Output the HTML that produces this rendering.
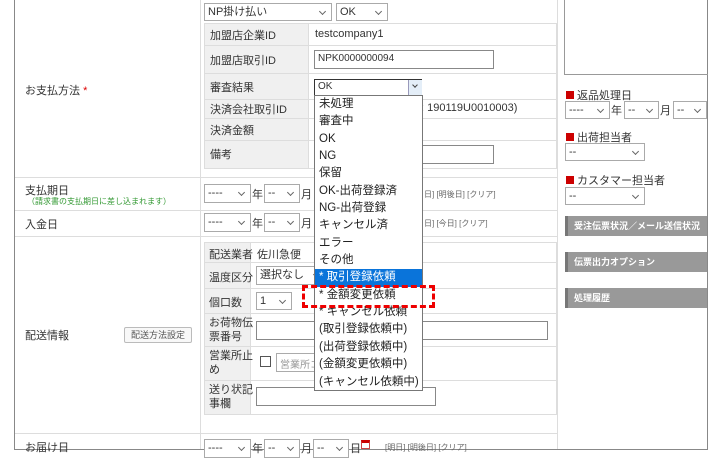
<!DOCTYPE html>
<html><head><meta charset="utf-8"><style>
*{box-sizing:border-box;margin:0;padding:0}
body{width:715px;height:456px;background:#fff;position:relative;overflow:hidden;font-family:"Liberation Sans","Noto Sans CJK JP",sans-serif;font-size:11px;color:#333}
.a{position:absolute;white-space:nowrap}
.b{position:absolute;border:1px solid #ababab;background:#fff;white-space:nowrap;overflow:hidden}
.sel{position:absolute;border:1px solid #aaa;background:#fff;font-size:11px;padding:1px 3px;line-height:15px;white-space:nowrap}
.sel:after{content:"";position:absolute;right:6px;top:5px;width:4px;height:4px;border-right:1px solid #666;border-bottom:1px solid #666;transform:rotate(45deg)}
.bar{position:absolute;left:565px;width:142px;height:20px;background:#999;border-left:3px solid #777;color:#fff;font-size:9px;line-height:20px;padding-left:6px;font-weight:bold;white-space:nowrap}
.dd div{height:17.35px;line-height:17px;padding-left:4px;font-size:11.5px;color:#222;white-space:nowrap}
.red{display:inline-block;width:8px;height:8px;background:#c00;margin-right:3px}
.lnk{position:absolute;font-size:8px;color:#666;white-space:nowrap}
</style></head><body>
<div class="a" style="left:14px;top:0;width:694px;height:450px;border:1px solid #888;border-top:none"></div>
<div class="a" style="left:200px;top:0;width:1px;height:449px;background:#ddd"></div>
<div class="a" style="left:557px;top:0;width:1px;height:449px;background:#ddd"></div>
<div class="a" style="left:15px;top:177px;width:542px;height:1px;background:#ddd"></div>
<div class="a" style="left:15px;top:210px;width:542px;height:1px;background:#ddd"></div>
<div class="a" style="left:15px;top:236px;width:542px;height:1px;background:#ddd"></div>
<div class="a" style="left:15px;top:433px;width:542px;height:1px;background:#ddd"></div>

<div class="a" style="left:25px;top:82px">お支払方法 <span style="color:#d00">*</span></div>
<div class="a" style="left:25px;top:182px">支払期日</div>
<div class="a" style="left:27px;top:196px;font-size:8px;color:#393">（請求書の支払期日に差し込まれます）</div>
<div class="a" style="left:25px;top:216px">入金日</div>
<div class="a" style="left:25px;top:327px">配送情報</div>
<div class="a" style="left:124px;top:327px;width:68px;height:16px;border:1px solid #bbb;border-radius:2px;background:#f8f8f8;font-size:9px;line-height:14px;text-align:center;color:#555">配送方法設定</div>
<div class="a" style="left:25px;top:439px">お届け日</div>

<div class="sel" style="left:204px;top:3px;width:128px;height:18px">NP掛け払い</div>
<div class="sel" style="left:336px;top:3px;width:52px;height:18px">OK</div>

<div class="a" style="left:204px;top:23px;width:353px;height:146px;border:1px solid #ddd"></div>
<div class="a" style="left:205px;top:24px;width:104px;height:144px;background:#f0f0f0;border-right:1px solid #ddd"></div>
<div class="a" style="left:205px;top:45px;width:351px;height:1px;background:#ddd"></div>
<div class="a" style="left:205px;top:73px;width:351px;height:1px;background:#ddd"></div>
<div class="a" style="left:205px;top:99px;width:351px;height:1px;background:#ddd"></div>
<div class="a" style="left:205px;top:118px;width:351px;height:1px;background:#ddd"></div>
<div class="a" style="left:205px;top:140px;width:351px;height:1px;background:#ddd"></div>
<div class="a" style="left:210px;top:27px">加盟店企業ID</div>
<div class="a" style="left:210px;top:52px">加盟店取引ID</div>
<div class="a" style="left:210px;top:79px">審査結果</div>
<div class="a" style="left:210px;top:101px">決済会社取引ID</div>
<div class="a" style="left:210px;top:122px">決済金額</div>
<div class="a" style="left:210px;top:146px">備考</div>
<div class="a" style="left:315px;top:28px">testcompany1</div>
<div class="b" style="left:314px;top:50px;width:180px;height:19px;border-color:#888;padding:2px 3px;font-size:10px">NPK0000000094</div>
<div class="a" style="left:421px;top:102px">: 190119U0010003)</div>
<div class="b" style="left:420px;top:145px;width:74px;height:19px;border-color:#888"></div>
<div class="b" style="left:314px;top:79px;width:108px;height:17px;border-color:#333;padding:1px 3px;font-size:10px">OK</div>
<div class="a" style="left:408px;top:80px;width:14px;height:15px;background:#e4eef8;border-left:1px solid #99b"><div style="position:absolute;left:4px;top:3px;width:4px;height:4px;border-right:1px solid #444;border-bottom:1px solid #444;transform:rotate(45deg)"></div></div>

<div class="a" style="left:564px;top:0;width:144px;height:75px;border:1px solid #999;border-top:none;border-right:none"></div>
<div class="a" style="left:566px;top:87px;font-size:11px"><span class="red"></span>返品処理日</div>
<div class="sel" style="left:565px;top:101px;width:45px;height:18px">----</div><div class="a" style="left:611px;top:102px">年</div>
<div class="sel" style="left:624px;top:101px;width:35px;height:18px">--</div><div class="a" style="left:660px;top:102px">月</div>
<div class="sel" style="left:673px;top:101px;width:34px;height:18px">--</div>
<div class="a" style="left:566px;top:129px"><span class="red"></span>出荷担当者</div>
<div class="sel" style="left:565px;top:143px;width:80px;height:18px">--</div>
<div class="a" style="left:566px;top:172px"><span class="red"></span>カスタマー担当者</div>
<div class="sel" style="left:565px;top:187px;width:80px;height:18px">--</div>
<div class="bar" style="top:216px">受注伝票状況／メール送信状況</div>
<div class="bar" style="top:252px">伝票出力オプション</div>
<div class="bar" style="top:288px">処理履歴</div>

<div class="sel" style="left:204px;top:184px;width:47px;height:19px">----</div><div class="a" style="left:252px;top:186px">年</div>
<div class="sel" style="left:264px;top:184px;width:36px;height:19px">--</div><div class="a" style="left:301px;top:186px">月</div>
<div class="lnk" style="left:424px;top:189px">日] [明後日] [クリア]</div>
<div class="sel" style="left:204px;top:213px;width:47px;height:19px">----</div><div class="a" style="left:252px;top:215px">年</div>
<div class="sel" style="left:264px;top:213px;width:36px;height:19px">--</div><div class="a" style="left:301px;top:215px">月</div>
<div class="lnk" style="left:424px;top:218px">日] [今日] [クリア]</div>

<div class="a" style="left:204px;top:242px;width:353px;height:173px;border:1px solid #ddd"></div>
<div class="a" style="left:205px;top:243px;width:46px;height:171px;background:#f0f0f0;border-right:1px solid #ddd"></div>
<div class="a" style="left:205px;top:262px;width:351px;height:1px;background:#ddd"></div>
<div class="a" style="left:205px;top:288px;width:351px;height:1px;background:#ddd"></div>
<div class="a" style="left:205px;top:313px;width:351px;height:1px;background:#ddd"></div>
<div class="a" style="left:205px;top:346px;width:351px;height:1px;background:#ddd"></div>
<div class="a" style="left:205px;top:380px;width:351px;height:1px;background:#ddd"></div>
<div class="a" style="left:209px;top:246px">配送業者</div>
<div class="a" style="left:209px;top:269px">温度区分</div>
<div class="a" style="left:209px;top:294px">個口数</div>
<div class="a" style="left:209px;top:316px;line-height:14px">お荷物伝<br>票番号</div>
<div class="a" style="left:209px;top:349px;line-height:14px">営業所止<br>め</div>
<div class="a" style="left:209px;top:383px;line-height:14px">送り状記<br>事欄</div>
<div class="a" style="left:257px;top:246px">佐川急便</div>
<div class="sel" style="left:256px;top:266px;width:70px;height:19px">選択なし</div>
<div class="sel" style="left:256px;top:292px;width:36px;height:18px">1</div>
<div class="b" style="left:256px;top:321px;width:292px;height:19px;border-color:#888"></div>
<div class="b" style="left:260px;top:356px;width:11px;height:11px;border-color:#555"></div>
<div class="b" style="left:276px;top:353px;width:40px;height:19px;color:#999;padding:2px 3px;font-size:10px">営業所コ</div>
<div class="b" style="left:256px;top:387px;width:180px;height:19px;border-color:#888"></div>

<div class="sel" style="left:204px;top:439px;width:47px;height:19px">----</div><div class="a" style="left:252px;top:440px">年</div>
<div class="sel" style="left:264px;top:439px;width:36px;height:19px">--</div><div class="a" style="left:301px;top:440px">月</div>
<div class="sel" style="left:313px;top:439px;width:36px;height:19px">--</div><div class="a" style="left:350px;top:440px">日</div>
<div class="a" style="left:361px;top:440px;width:9px;height:9px;border:1px solid #c44;border-top:3px solid #c00"></div>
<div class="lnk" style="left:385px;top:442px">[明日] [明後日] [クリア]</div>

<div class="a dd" style="left:314px;top:95px;width:109px;height:296px;background:#fff;border:1px solid #777">
<div>未処理</div><div>審査中</div><div>OK</div><div>NG</div><div>保留</div><div>OK-出荷登録済</div><div>NG-出荷登録</div><div>キャンセル済</div><div>エラー</div><div>その他</div>
<div style="background:#0a74da;color:#fff">* 取引登録依頼</div><div>* 金額変更依頼</div><div>* キャンセル依頼</div><div>(取引登録依頼中)</div><div>(出荷登録依頼中)</div><div>(金額変更依頼中)</div><div>(キャンセル依頼中)</div>
</div>
<div class="a" style="left:302px;top:285px;width:133px;height:23px;border:3px dashed #e00"></div>
</body></html>
